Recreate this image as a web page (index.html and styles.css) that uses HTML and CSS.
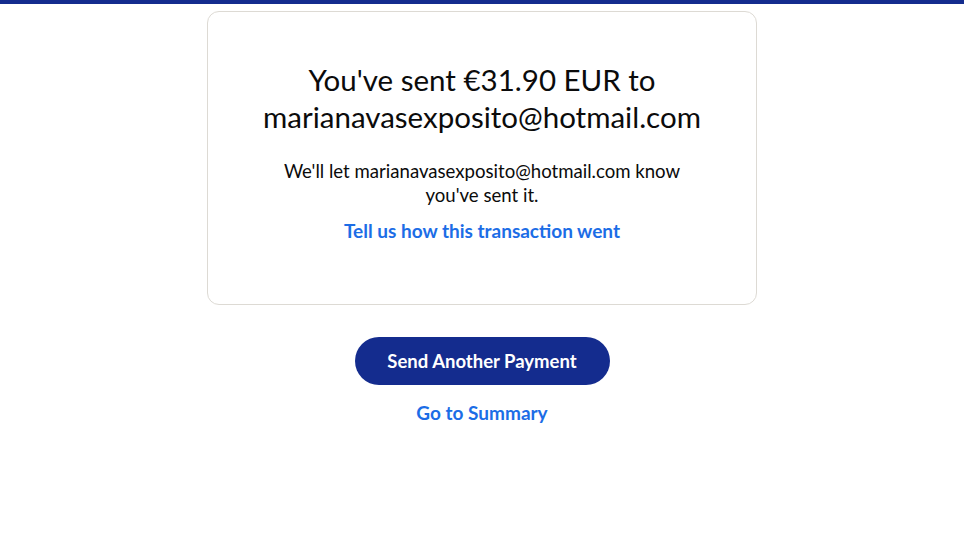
FILE: index.html
```html
<!DOCTYPE html>
<html lang="en">
<head>
<meta charset="utf-8">
<link rel="stylesheet" href="styles.css">
</head>
<body>
<div class="topbar"></div>
<main class="page">
  <section class="card">
    <h1 class="title">You've sent €31.90 EUR to<br>marianavasexposito@hotmail.com</h1>
    <p class="note">We'll let marianavasexposito@hotmail.com know<br>you've sent it.</p>
    <a class="link feedback" href="#">Tell us how this transaction went</a>
  </section>
  <div class="actions">
    <button class="primary">Send Another Payment</button>
    <a class="link summary" href="#">Go to Summary</a>
  </div>
</main>
</body>
</html>
```
FILE: styles.css
```css
* { box-sizing: border-box; }
html, body { margin: 0; padding: 0; background: #fff; }
body {
  font-family: Lato, "Open Sans", sans-serif;
  color: #001435;
}
.topbar { height: 4px; background: #142c8e; }
.page {
  display: flex;
  flex-direction: column;
  align-items: center;
  padding-top: 7px;
}
.card {
  width: 550px;
  height: 294px;
  border: 1px solid #dddad4;
  border-radius: 12px;
  display: flex;
  flex-direction: column;
  align-items: center;
  text-align: center;
  padding-top: 49px;
}
.title {
  margin: 0;
  font-size: 29.5px;
  font-weight: 400;
  line-height: 37px;
  color: #0b0b0b;
}
.note {
  margin: 24px 0 0;
  font-size: 18.6px;
  line-height: 24px;
  color: #0b0b0b;
}
.link {
  color: #1c6de6;
  font-weight: 700;
  font-size: 19px;
  text-decoration: none;
}
.feedback { margin-top: 12px; line-height: 24px; }
.actions {
  display: flex;
  flex-direction: column;
  align-items: center;
  margin-top: 32px;
}
.primary {
  width: 255px;
  height: 48px;
  border: none;
  border-radius: 24px;
  background: #142c8e;
  color: #fff;
  font-family: inherit;
  font-weight: 700;
  font-size: 18.5px;
}
.summary { margin-top: 16px; line-height: 24px; }
```
